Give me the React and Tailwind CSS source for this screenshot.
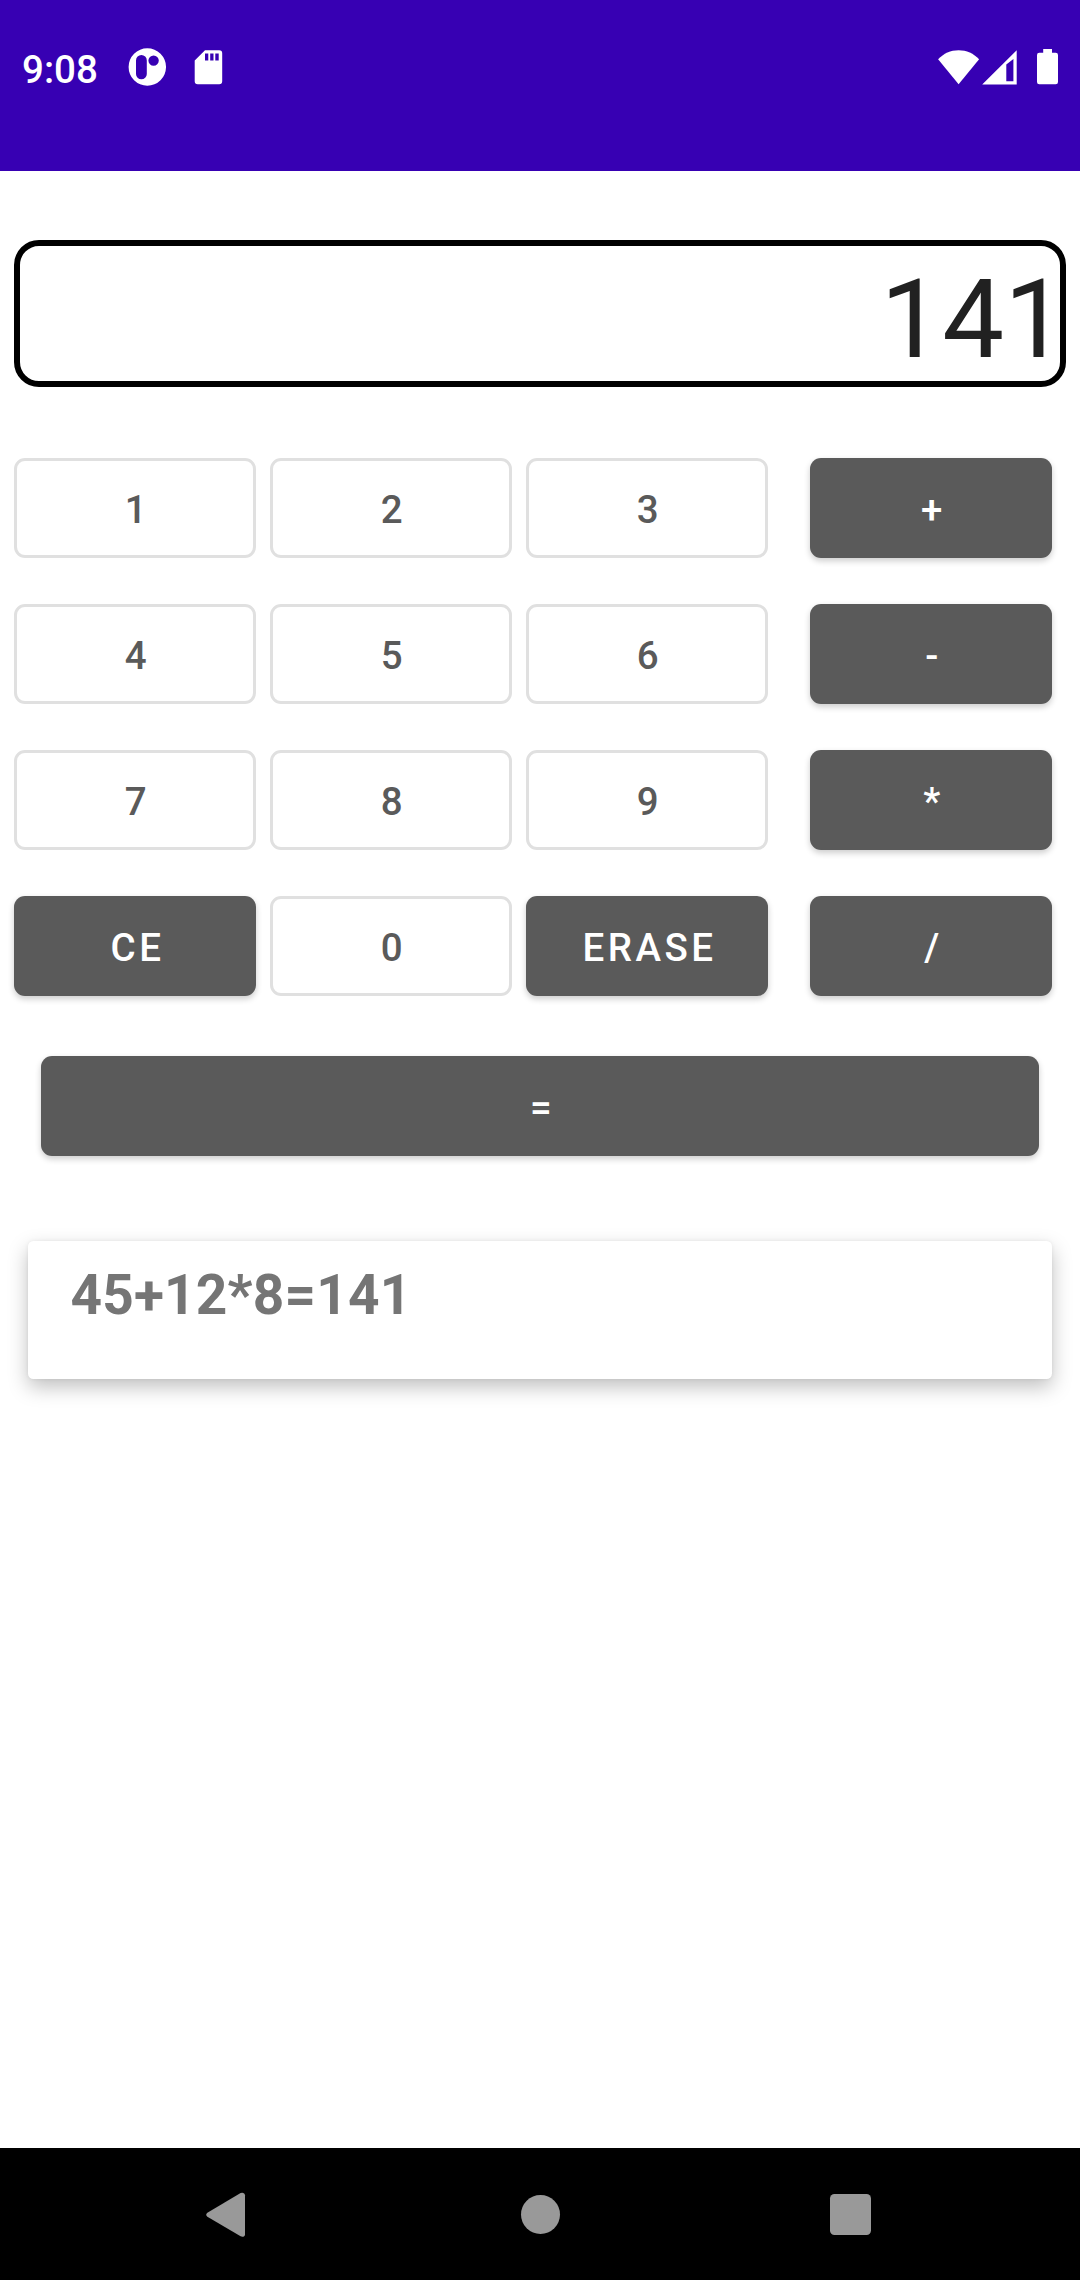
const OUTLINE = "border-[3px] border-[#e0e0e0] bg-white text-[#5a5a5a]";
const FILLED = "bg-[#5a5a5a] text-white shadow-[0_3px_6px_rgba(0,0,0,0.2)]";

function Key({ label, filled, wide }) {
  return (
    <button
      className={`flex h-[100px] items-center justify-center rounded-[11px] pt-[3px] pl-[5px] text-[38.5px] leading-[46px] font-medium tracking-[0.0893em] ${
        filled ? FILLED : OUTLINE
      } ${wide ? "w-full" : "w-[242px] shrink-0"}`}
    >
      {label}
    </button>
  );
}

function StatusBar() {
  return (
    <header className="flex h-[171px] items-start bg-[#3700b3] pt-[46px] pr-[22px] pl-[22px] text-white">
      <span className="w-[106px] text-[38.5px] leading-[47px] font-medium">9:08</span>
      <svg className="mt-[2px] h-[38px] w-[38px]" viewBox="0 0 38 38" fill="currentColor">
        <path
          fillRule="evenodd"
          d="M19.3 .3a18.7 18.7 0 1 1 0 37.4a18.7 18.7 0 1 1 0-37.4zM13.4 7a5.4 5.4 0 0 0-5.4 5.4v13.5a5.4 5.4 0 0 0 10.8 0v-13.5a5.4 5.4 0 0 0-5.4-5.4zM25.6 7.400a5.200 5.200 0 1 0 0 10.400a5.200 5.200 0 1 0 0-10.400z"
        />
      </svg>
      <svg className="mt-1 ml-7 h-[35px] w-[29px]" viewBox="0 0 29 35" fill="currentColor">
        <path
          fillRule="evenodd"
          d="M11 .2H25.200a3 3 0 0 1 3 3V31.300a3 3 0 0 1-3 3H3.700a3 3 0 0 1-3-3V10.500zM11 3.500v7h3.300v-7zM16.200 3.500v7h3.300v-7zM21.300 3.500v7h3.400v-7z"
        />
      </svg>
      <svg className="mt-1 ml-auto h-[35px] w-[42px]" viewBox="0 0 42 35" fill="currentColor">
        <path d="M20.600 34.300L.1 9.300C5.600 3.500 12.600 .3 20.600 .3S35.600 3.500 41.100 9.300z" />
      </svg>
      <svg className="mt-1 ml-[2px] h-[35px] w-[36px]" viewBox="0 0 36 35" fill="currentColor">
        <path fillRule="evenodd" d="M.2 34.500L34.700 .2V34.500zM24.300 14.600V31.200H31.400V9z" />
      </svg>
      <svg className="mt-[3px] ml-[19px] h-[36px] w-[21px]" viewBox="0 0 21 36" fill="currentColor">
        <path d="M6.200 0h8.800v3.800h3.700a2.300 2.300 0 0 1 2.300 2.300V33a2.300 2.300 0 0 1-2.300 2.300H2.300A2.300 2.300 0 0 1 0 33V6.100a2.300 2.300 0 0 1 2.300-2.300h3.900z" />
      </svg>
    </header>
  );
}

const ROWS = [
  ["1", "2", "3", "+"],
  ["4", "5", "6", "-"],
  ["7", "8", "9", "*"],
  ["CE", "0", "ERASE", "/"],
];

function NavBar() {
  return (
    <nav className="flex h-[132px] items-center bg-black pt-px text-[#999999]">
      <svg className="ml-[206px] h-[46px] w-[40px]" viewBox="0 0 40 46" fill="currentColor">
        <path d="M1.400 20.700L34.600 1.100Q36.500 .2 38.200 1.400Q39 2.200 39 3.300V42.200Q39 43.500 38.200 44.200Q36.500 45.300 34.600 44.300L1.400 24.700Q-1 22.700 1.400 20.700z" />
      </svg>
      <span className="ml-[275px] h-[39px] w-[39px] rounded-full bg-current" />
      <span className="ml-[270px] h-[41px] w-[41px] rounded-[4.5px] bg-current" />
    </nav>
  );
}

export default function App() {
  return (
    <div className="flex h-[2280px] w-[1080px] flex-col bg-white font-[Roboto,sans-serif]">
      <StatusBar />
      <main className="flex-1">
        <div className="mx-[14px] mt-[69px] flex h-[147px] items-center justify-end rounded-[25px] border-[6px] border-black pt-3">
          <span className="-mr-[6px] text-[110px] leading-[129px] text-[#212121]">141</span>
        </div>
        <div className="mt-[71px] ml-[14px] flex flex-col gap-[46px]">
          {ROWS.map((row) => (
            <div key={row[0]} className="flex gap-[14px]">
              {row.map((label, i) => (
                <div key={label} className={i === 3 ? "ml-7" : ""}>
                  <Key label={label} filled={!/^\d$/.test(label)} />
                </div>
              ))}
            </div>
          ))}
        </div>
        <div className="mt-[60px] px-[41px]">
          <Key label="=" filled wide />
        </div>
        <div className="mx-7 mt-[85px] h-[138px] rounded-[5.5px] bg-white pt-[22px] pl-[42.4px] shadow-[0_8px_20px_rgba(0,0,0,0.25),0_0_4px_rgba(0,0,0,0.06)]">
          <p className="text-[55px] leading-[64px] font-bold tracking-[0.2px] text-[#757575]">45+12*8=141</p>
        </div>
      </main>
      <NavBar />
    </div>
  );
}
